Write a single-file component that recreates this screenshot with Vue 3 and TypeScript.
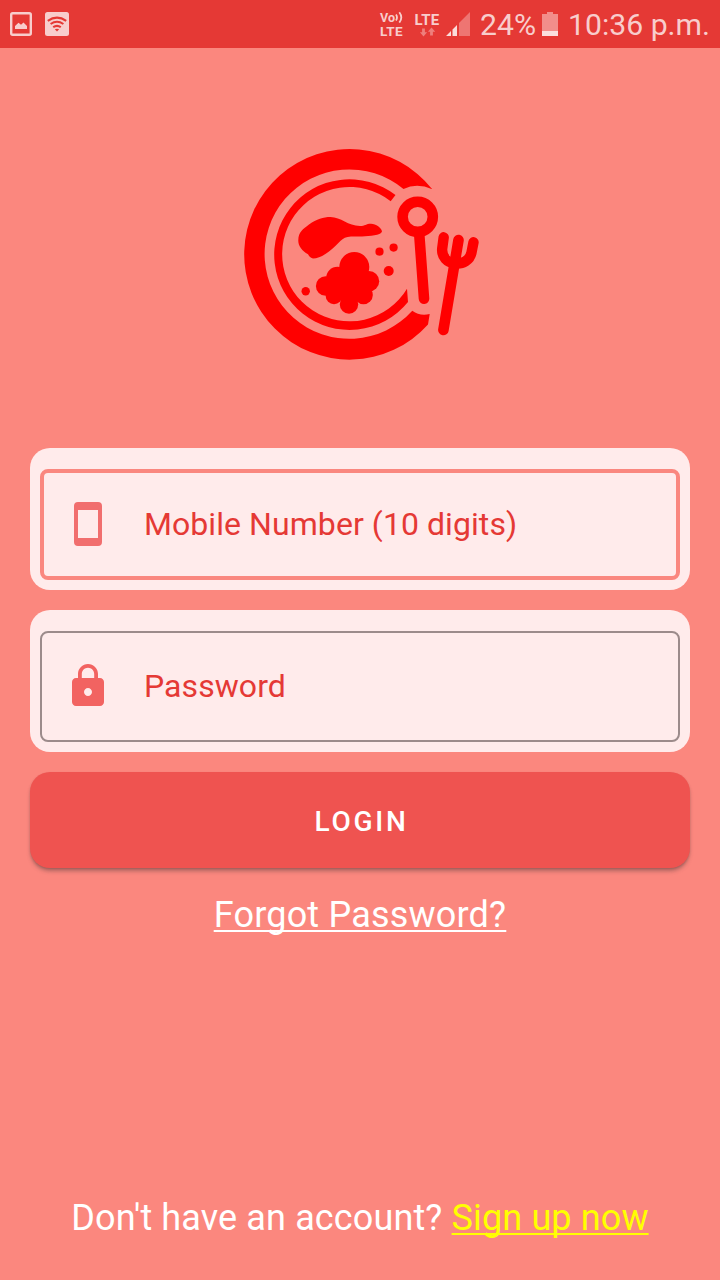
<script setup lang="ts">
import { ref } from 'vue'

const mobile = ref('')
const password = ref('')
const battery = 24
const time = '10:36 p.m.'
</script>

<template>
  <div class="screen">
    <header class="status">
      <svg class="notif" width="72" height="48" viewBox="0 0 72 48">
        <rect x="11.2" y="13.2" width="19.6" height="21.6" rx="1.5" fill="none" stroke="#f8cdcc" stroke-width="2.4" />
        <path d="M15 29v-3l3.5-3.2 2.5 2 2.5-2.3 3.5 3.5v3z" fill="#f8cdcc" />
        <rect x="45" y="12" width="24" height="24" rx="2.5" fill="#f8cdcc" />
        <g fill="none" stroke="#e53935" stroke-width="2.1">
          <path d="M47.8 20.8q9.2-6.4 18.4 0" />
          <path d="M50.6 24q6.4-4.4 12.8 0" />
          <path d="M53.2 27.2q3.8-2.6 7.6 0" />
        </g>
        <path d="M54.8 29.3q2.2-1.2 4.4 0L57 31.6z" fill="#e53935" />
      </svg>
      <div class="volte">
        <span class="vo">Vo<svg width="9" height="12" viewBox="0 0 9 12"><path d="M1 3.500q2 3 0 6M4.300 1.200q4 5.200 0 10.400" fill="none" stroke="#f8cdcc" stroke-width="1.800" /></svg></span>
        <span class="lte">LTE</span>
      </div>
      <div class="data">
        <span>LTE</span>
        <svg width="16" height="10" viewBox="419 27 16 10">
          <path d="M422.100 28.500h2.800v3.800h2.200l-3.600 4.200-3.600-4.200h2.200zM430.100 35.500h2.800v-3.800h2.200l-3.600-4.200-3.600 4.200h2.200z" fill="#ee7f7c" />
        </svg>
      </div>
      <svg class="signal" width="24" height="24" viewBox="446 12 24 24">
        <path d="M446 36l5-5v5zM452.500 29.500l4.500-4.500V36h-4.500z" fill="#fadcdb" />
        <path d="M459 23l11-11v24h-11z" fill="#ee7572" />
      </svg>
      <span class="percent">{{ battery }}%</span>
      <svg class="battery" width="16" height="24" viewBox="0 0 16 24">
        <path d="M5 0h6v2h5v22H0V2h5z" fill="#f28d8a" />
        <path d="M0 19h16v5H0z" fill="#fbdedd" />
      </svg>
      <span class="time">{{ time }}</span>
    </header>

    <main>
      <svg class="logo" width="255" height="230" viewBox="235 140 255 230" fill="#f00">
        <path d="M432.300 189.300A105.300 105.300 0 1 0 428 324.500L429.700 314Q420 316.500 412.300 310.700A84.700 84.700 0 1 1 403.500 189Q417 182.500 432.300 189.300z" />
        <path d="M395.500 195A75.300 75.300 0 1 0 408 302L407 288.700A67.200 67.200 0 1 1 390.700 201.200z" />
        <path d="M298.300 240C298.500 232 303 229 309 224.500C317 219 323 217 330.500 217C341 217 348 226 360 226C365 226 366 223.700 371 223.700C376 224 381.500 227.500 382 231.500C380.500 236 370 235.500 362 236.500H351C341 237 340 243 329 251.500C323 256 318 258.500 313 258.500C310 258 309 256 308 254.300C302 250.500 298 246 298.300 240z" />
        <circle cx="354.300" cy="267" r="15" />
        <circle cx="337.500" cy="278" r="11.300" />
        <circle cx="325.700" cy="286" r="9.800" />
        <circle cx="369" cy="281.300" r="10.200" />
        <circle cx="363.500" cy="295" r="9.300" />
        <circle cx="334" cy="296" r="8.300" />
        <circle cx="349" cy="304.500" r="9.200" />
        <circle cx="349" cy="288" r="15" />
        <circle cx="305.700" cy="291.200" r="4.200" />
        <circle cx="379.500" cy="251.700" r="4.100" />
        <circle cx="393.600" cy="247.600" r="4.100" />
        <circle cx="388.700" cy="271" r="5" />
        <g fill="none" stroke="#f00" stroke-linecap="round">
          <circle cx="417.700" cy="216.800" r="15.100" stroke-width="10.600" />
          <path d="M419.300 235L424 298.700M458.500 240L443.400 330" stroke-width="10.600" />
          <path d="M443.700 237.300L442.200 248.500C441.500 257 447 262.500 455 263.500C463 264.500 470 260 471.500 252.500L473.500 242.300" stroke-width="10.400" />
        </g>
      </svg>

      <form @submit.prevent>
        <div class="card">
          <label class="field active">
            <svg width="48" height="48" viewBox="0 0 24 24" fill="#f16e6e">
              <path fill-rule="evenodd" d="M7 1h10a2 2 0 0 1 2 2v18a2 2 0 0 1-2 2H7a2 2 0 0 1-2-2V3a2 2 0 0 1 2-2zM7 5v14h10V5z" />
            </svg>
            <input v-model="mobile" type="tel" placeholder="Mobile Number (10 digits)" />
          </label>
        </div>
        <div class="card">
          <label class="field">
            <svg width="48" height="48" viewBox="0 0 24 24" fill="#f26361">
              <path d="M18 8h-1V6c0-2.760-2.240-5-5-5S7 3.240 7 6v2H6c-1.100 0-2 .9-2 2v10c0 1.100.9 2 2 2h12c1.100 0 2-.9 2-2V10c0-1.100-.9-2-2-2zm-6 9c-1.100 0-2-.9-2-2s.9-2 2-2 2 .9 2 2-.9 2-2 2zm3.100-9H8.900V6c0-1.710 1.390-3.100 3.100-3.100s3.100 1.390 3.100 3.100z" />
            </svg>
            <input v-model="password" type="password" placeholder="Password" />
          </label>
        </div>
        <button type="submit">LOGIN</button>
      </form>
      <a class="forgot">Forgot Password?</a>
    </main>

    <footer>Don't have an account? <a>Sign up now</a></footer>
  </div>
</template>

<style>
body {
  margin: 0;
}
</style>

<style scoped>
.screen {
  box-sizing: border-box;
  width: 720px;
  height: 1280px;
  display: flex;
  flex-direction: column;
  overflow: hidden;
  background: #fb877e;
  color: #fff;
  font-family: Roboto, sans-serif;
}
.status {
  height: 48px;
  flex: none;
  display: flex;
  align-items: center;
  background: #e53935;
  color: #f8cdcc;
  font-size: 30.2px;
  line-height: 48px;
  white-space: nowrap;
}
.volte {
  width: 25px;
  height: 26px;
  margin-left: 308px;
  display: flex;
  flex-direction: column;
  font-weight: 700;
}
.vo {
  height: 13px;
  display: flex;
  font-size: 12.5px;
  line-height: 14px;
}
.lte {
  height: 13px;
  font-size: 13.5px;
  line-height: 14px;
  letter-spacing: 0.4px;
}
.data {
  width: 26px;
  height: 26px;
  margin-left: 9px;
  display: flex;
  flex-direction: column;
  align-items: center;
  font-weight: 700;
  font-size: 15px;
  line-height: 16px;
  letter-spacing: 0.2px;
}
.data span {
  padding-top: 1px;
  height: 15px;
}
.signal {
  margin-left: 6px;
}
.percent {
  width: 62px;
  margin-left: 10px;
  padding-top: 2px;
}
.time {
  margin-left: 10px;
  padding-top: 2px;
}
main {
  flex: 1;
  display: flex;
  flex-direction: column;
  align-items: center;
}
.logo {
  margin: 92px 0 78px 5px;
}
form {
  width: 660px;
  display: flex;
  flex-direction: column;
  gap: 20px;
}
.card {
  box-sizing: border-box;
  height: 142px;
  padding: 21px 10px 10px;
  border-radius: 20px;
  background: #ffebeb;
}
.field {
  box-sizing: border-box;
  height: 111px;
  display: flex;
  align-items: center;
  gap: 32px;
  padding: 0 22px 1px;
  border: 2px solid #9c8b8b;
  border-radius: 8px;
}
.field.active {
  padding: 0 20px 1px;
  border: 4px solid #fa877f;
}
input {
  flex: 1;
  min-width: 0;
  padding: 0;
  border: 0;
  outline: 0;
  background: none;
  color: #e53935;
  font: 32px/40px Roboto, sans-serif;
  letter-spacing: 0.07px;
}
input::placeholder {
  color: #e53935;
  opacity: 1;
}
button {
  height: 96px;
  padding: 4px 0 0 3px;
  border: 0;
  border-radius: 20px;
  background: #ef5350;
  color: #fff;
  font: 500 28px/40px Roboto, sans-serif;
  letter-spacing: 2.75px;
  box-shadow: 0 4px 4px -1px rgba(80, 60, 60, 0.45), 0 1px 2px rgba(80, 60, 60, 0.2);
}
.forgot {
  margin-top: 26px;
  font-size: 36px;
  line-height: 42px;
  letter-spacing: 0.2px;
}
a {
  text-decoration: underline;
  text-decoration-thickness: 2px;
  text-decoration-skip-ink: none;
  text-underline-offset: 3px;
}
footer {
  flex: none;
  height: 42px;
  margin-bottom: 41px;
  text-align: center;
  font-size: 36px;
  line-height: 42px;
  letter-spacing: 0.13px;
}
footer a {
  color: #ff0;
}
</style>
